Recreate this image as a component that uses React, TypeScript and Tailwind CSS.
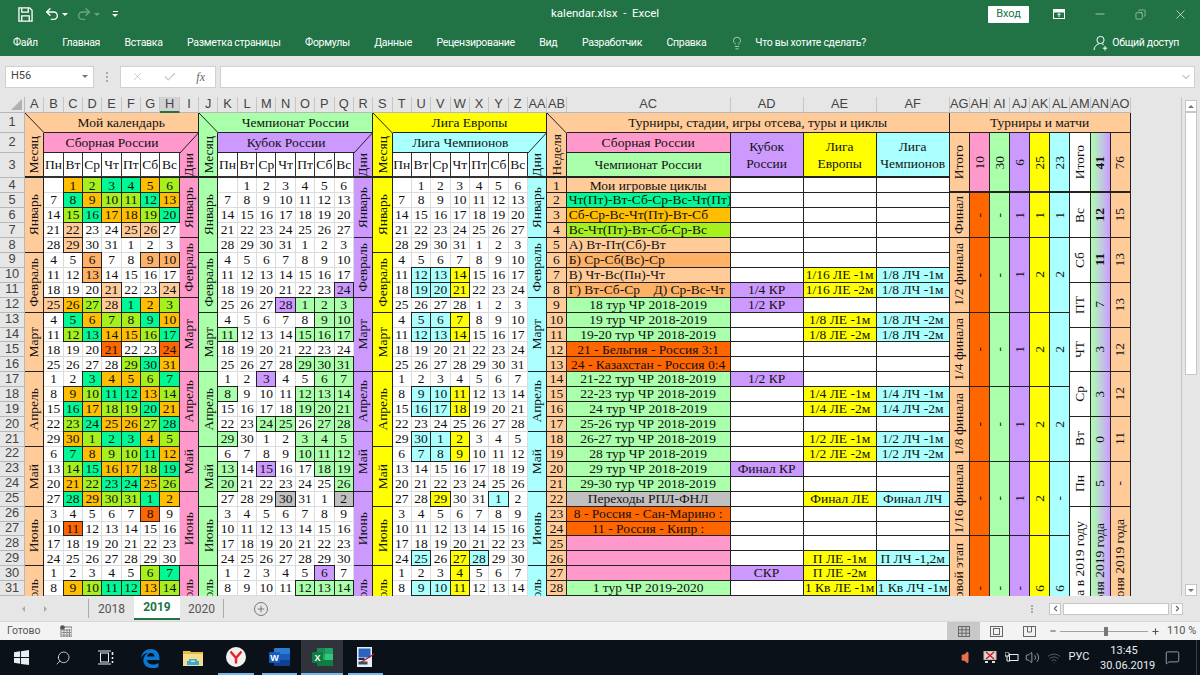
import React from "react";
import { Undo2, Redo2, X, Check, Lightbulb, ChevronDown, Minus, Copy, Search, MessageSquare, Volume2, Volume, Plus, Wifi, ChevronLeft, ChevronRight } from "lucide-react";

const LETTERS = ["A","B","C","D","E","F","G","H","I","J","K","L","M","N","O","P","Q","R","S","T","U","V","W","X","Y","Z","AA","AB","AC","AD","AE","AF","AG","AH","AI","AJ","AK","AL","AM","AN","AO"];

const RS: Record<number, string> = { 1: "", 2: "row-span-2", 3: "row-span-3", 4: "row-span-4", 5: "row-span-5", 7: "row-span-7", 9: "row-span-9" };

const PEACH = "bg-[#ffcc99]", PINK = "bg-[#ff99cc]", GREEN = "bg-[#aaffaa]", PURPLE = "bg-[#cc99ff]", YELLOW = "bg-[#ffff00]", CYAN = "bg-[#aaffff]", RED = "bg-[#ff6600]", GRAD = "bg-linear-to-r from-[#aaffaa] to-[#cc99ff]", WHITE = "bg-white";

const LINE = "border-r border-b border-[#222]";
const MARK = "relative z-10 -ml-px -mt-px border border-[#222] flex items-center justify-center";
const DAY: Record<string, string> = {
  ".": "bg-white border-r border-b border-[#dcdcdc] flex items-center justify-center",
  O: `bg-[#ffbf00] ${MARK}`,
  L: `bg-[#a6f01e] ${MARK}`,
  M: `bg-[#00f995] ${MARK}`,
  p: `bg-[#ffcc99] ${MARK}`,
  P: `bg-[#ffb266] ${MARK}`,
  R: `bg-[#ff6600] ${MARK}`,
  g: `bg-[#aaffaa] ${MARK}`,
  v: `bg-[#cc99ff] ${MARK}`,
  s: `bg-[#c0c0c0] ${MARK}`,
  c: `bg-[#aaffff] ${MARK}`,
  y: `bg-[#ffff00] ${MARK}`,
};

const B = ".......";
const CAL1 = [".OLMMOL",".MOLLMO",".LMOOLM",".p..pp.",".p.....","..P..PP","..P....","...p..p","pOLpMOL",".MOLLMO",".LMOOLM","...R..R","....LMO","..MOOLM",".OLMMOL",".MOLLMO",".LMOOLM",".OLMMOL",".MOLLMO",".LMOOLM",".OLMMOL",".MOLLMO",".....R.",".R.....",B,B,".....LM",".OLMMOL"];
const CAL2 = [B,B,B,B,B,B,B,"......v","...vggg",".....gg","g...ggg",B,"....ggg","..v..gg","g...ggg","....ggg","..gg.gg","g...ggg","....ggg","g.v..gg","g.....g","...s..s",B,B,B,B,".....v.","....ggg"];
const CAL3 = [B,B,B,B,B,B,".ccy...",".ccy...",B,".ccy...",".ccy...",B,B,B,".ccy...",".ccy...",B,".ccy...",".ccy...",B,B,"..y..c.",B,B,B,".c.yc..","...y...",".ccy..."];

const AC: [string, string, boolean?][] = [
  ["Мои игровые циклы", PEACH],
  ["Чт(Пт)-Вт-Сб-Ср-Вс-Чт(Пт)", "bg-[#00f995]", true],
  ["Сб-Ср-Вс-Чт(Пт)-Вт-Сб", "bg-[#ffbf00]", true],
  ["Вс-Чт(Пт)-Вт-Сб-Ср-Вс", "bg-[#a6f01e]", true],
  ["А) Вт-Пт(Сб)-Вт", PEACH, true],
  ["Б) Ср-Сб(Вс)-Ср", "bg-[#ffb266]", true],
  ["В) Чт-Вс(Пн)-Чт", PEACH, true],
  ["Г) Вт-Сб-Ср    Д) Ср-Вс-Чт", "bg-[#ffb266]", true],
  ["18 тур ЧР 2018-2019", GREEN],
  ["19 тур ЧР 2018-2019", GREEN],
  ["19-20 тур ЧР 2018-2019", GREEN],
  ["21 - Бельгия - Россия 3:1", RED],
  ["24 - Казахстан - Россия 0:4", RED],
  ["21-22 тур ЧР 2018-2019", GREEN],
  ["22-23 тур ЧР 2018-2019", GREEN],
  ["24 тур ЧР 2018-2019", GREEN],
  ["25-26 тур ЧР 2018-2019", GREEN],
  ["26-27 тур ЧР 2018-2019", GREEN],
  ["28 тур ЧР 2018-2019", GREEN],
  ["29 тур ЧР 2018-2019", GREEN],
  ["29-30 тур ЧР 2018-2019", GREEN],
  ["Переходы РПЛ-ФНЛ", "bg-[#c0c0c0]"],
  ["8 - Россия - Сан-Марино :", RED],
  ["11 - Россия - Кипр :", RED],
  ["", PINK],
  ["", PINK],
  ["", PINK],
  ["1 тур ЧР 2019-2020", GREEN],
];
const AD: Record<number, string> = { 11: "1/4 КР", 12: "1/2 КР", 17: "1/2 КР", 23: "Финал КР", 30: "СКР" };
const AE: Record<number, string> = { 10: "1/16 ЛЕ -1м", 11: "1/16 ЛЕ -2м", 13: "1/8 ЛЕ -1м", 14: "1/8 ЛЕ -2м", 18: "1/4 ЛЕ -1м", 19: "1/4 ЛЕ -2м", 21: "1/2 ЛЕ -1м", 22: "1/2 ЛЕ -2м", 25: "Финал ЛЕ", 29: "П ЛЕ -1м", 30: "П ЛЕ -2м", 31: "1 Кв ЛЕ -1м" };
const AF: Record<number, string> = { 10: "1/8 ЛЧ -1м", 11: "1/8 ЛЧ -1м", 13: "1/8 ЛЧ -2м", 14: "1/8 ЛЧ -2м", 18: "1/4 ЛЧ -1м", 19: "1/4 ЛЧ -2м", 21: "1/2 ЛЧ -1м", 22: "1/2 ЛЧ -2м", 25: "Финал ЛЧ", 29: "П ЛЧ -1,2м", 31: "1 Кв ЛЧ -1м" };

const LEFT_M: [number, number, string][] = [[4,5,"Январь"],[9,4,"Февраль"],[13,4,"Март"],[17,5,"Апрель"],[22,4,"Май"],[26,4,"Июнь"],[30,4,"Июль"]];
const RIGHT_M: [number, number, string][] = [[4,4,"Январь"],[8,4,"Февраль"],[12,5,"Март"],[17,4,"Апрель"],[21,4,"Май"],[25,5,"Июнь"],[30,4,"Июль"]];

const STAGES: [number, number, string, string[]][] = [
  [5,3,"Финал",["-","-","1","1","1"]],
  [8,5,"1/2 финала",["-","-","1","2","2"]],
  [13,5,"1/4 финала",["-","-","1","2","2"]],
  [18,5,"1/8 финала",["-","-","1","2","2"]],
  [23,5,"1/16 финала",["-","-","1","2","-"]],
  [28,7,"Групповой этап",["-","-","-","6","6"]],
];
const STAGE_BG = [RED, GREEN, PURPLE, YELLOW, CYAN];
const TOTALS: [number, number, string, string, string][] = [
  [5,3,"Вс","12","15"],
  [8,3,"Сб","11","13"],
  [11,3,"ПТ","7","13"],
  [14,3,"ЧТ","3","12"],
  [17,3,"Ср","3","12"],
  [20,3,"Вт","0","11"],
  [23,3,"Пн","5","-"],
  [26,9,"Матча в 2019 году","С июня 2019 года","До июня 2019 года"],
];

const Diag = ({ flip }: { flip?: boolean }) => (
  <svg className="absolute inset-0 w-full h-full" viewBox="0 0 100 100" preserveAspectRatio="none">
    <line x1={flip ? 100 : 0} y1="0" x2={flip ? 0 : 100} y2="100" stroke="#222" strokeWidth="1" vectorEffect="non-scaling-stroke" />
  </svg>
);
const Vert = ({ children, bold }: { children: React.ReactNode; bold?: boolean }) => (
  <span className={`[writing-mode:vertical-rl] rotate-180 whitespace-nowrap ${bold ? "font-bold" : ""}`}>{children}</span>
);
const CENTER = "flex items-center justify-center overflow-hidden";

function buildCells() {
  const c: React.ReactNode[] = [];
  let k = 0;
  const add = (cls: string, content?: React.ReactNode) => c.push(<div key={k++} className={cls}>{content}</div>);
  const rh = (n: number) => add("bg-[#e6e6e6] border-r border-b border-[#b8b8b8] font-['Liberation_Sans',sans-serif] text-[#444] text-[12.8px] flex items-center justify-center", n);

  // column letters
  add("bg-[#e6e6e6] border-r border-b border-[#b8b8b8] relative", <div className="absolute right-[2px] bottom-[2px] w-0 h-0 border-l-[11px] border-l-transparent border-b-[11px] border-b-[#b0b0b0]" />);
  LETTERS.forEach((l) =>
    add(`${l === "H" ? "bg-[#d2d2d2] border-b-2 border-b-[#217346]" : "bg-[#e6e6e6] border-b border-b-[#b8b8b8]"} border-r border-r-[#c6c6c6] font-['Liberation_Sans',sans-serif] text-[#444] text-[12.8px] flex items-center justify-center`, l)
  );

  // row 1
  rh(1);
  add(`${PEACH} relative`, <Diag />);
  add(`${PEACH} ${LINE} ${CENTER} col-span-8`, "Мой календарь");
  add(`${GREEN} relative`, <Diag />);
  add(`${GREEN} ${LINE} ${CENTER} col-span-8`, "Чемпионат России");
  add(`${YELLOW} relative`, <Diag />);
  add(`${YELLOW} ${LINE} ${CENTER} col-span-8`, "Лига Европы");
  add(`${PEACH} relative`, <Diag />);
  add(`${PEACH} ${LINE} ${CENTER} col-span-4`, "Турниры, стадии, игры отсева, туры и циклы");
  add(`${PEACH} ${LINE} ${CENTER} col-span-9`, "Турниры и матчи");

  // row 2
  rh(2);
  const labels: [string, string, string][] = [[PEACH, PINK, "Сборная России"], [GREEN, PURPLE, "Кубок России"], [YELLOW, CYAN, "Лига Чемпионов"]];
  labels.forEach(([a, b, t]) => {
    add(`${a} ${LINE} border-b-2 row-span-2 ${CENTER}`, <Vert>Месяц</Vert>);
    add(`${b} border-b border-[#222] ${CENTER} col-span-7`, t);
    add(`${b} border-r border-[#222] relative`, <Diag flip />);
  });
  add(`${PEACH} ${LINE} border-b-2 row-span-2 ${CENTER}`, <Vert>Неделя</Vert>);
  add(`${PINK} ${LINE} ${CENTER}`, "Сборная России");
  add(`${PURPLE} ${LINE} border-b-2 row-span-2 ${CENTER} text-center leading-[17px]`, <span>Кубок<br />России</span>);
  add(`${YELLOW} ${LINE} border-b-2 row-span-2 ${CENTER} text-center leading-[17px]`, <span>Лига<br />Европы</span>);
  add(`${CYAN} ${LINE} border-b-2 row-span-2 ${CENTER} text-center leading-[17px]`, <span>Лига<br />Чемпионов</span>);
  const heads: [string, string][] = [[PEACH, "Итого"], [PINK, "10"], [GREEN, "30"], [PURPLE, "6"], [YELLOW, "25"], [CYAN, "23"], [WHITE, "Итого"], [GRAD, "41"], [PEACH, "76"]];
  heads.forEach(([b, t]) => add(`${b} ${LINE} border-b-2 row-span-3 ${CENTER}`, <Vert bold={t === "41"}>{t}</Vert>));

  // row 3
  rh(3);
  const days = ["Пн", "Вт", "Ср", "Чт", "Пт", "Сб", "Вс"];
  [PINK, PURPLE, CYAN].forEach((b) => {
    days.forEach((d) => add(`bg-white border-r border-b-2 border-[#333] ${CENTER}`, d));
    add(`${b} ${LINE} border-b-2 ${CENTER}`, <Vert>Дни</Vert>);
  });
  add(`${GREEN} ${LINE} border-b-2 ${CENTER}`, "Чемпионат России");

  // data rows
  const monthAt = (list: [number, number, string][], r: number, bg: string) => {
    const m = list.find((x) => x[0] === r);
    if (m) add(`${bg} ${LINE} ${RS[m[1]]} ${CENTER}`, <Vert>{m[2]}</Vert>);
  };
  for (let r = 4; r <= 31; r++) {
    rh(r);
    const cal = (s: string) => {
      for (let d = 0; d < 7; d++) {
        const idx = (r - 4) * 7 + d - 1;
        const n = idx < 0 ? "" : new Date(2019, 0, 1 + idx).getDate();
        add(DAY[s[d]], n);
      }
    };
    monthAt(LEFT_M, r, PEACH);
    cal(CAL1[r - 4]);
    monthAt(RIGHT_M, r, PINK);
    monthAt(LEFT_M, r, GREEN);
    cal(CAL2[r - 4]);
    monthAt(RIGHT_M, r, PURPLE);
    monthAt(LEFT_M, r, YELLOW);
    cal(CAL3[r - 4]);
    monthAt(RIGHT_M, r, CYAN);
    add(`${PEACH} ${LINE} ${CENTER}`, r - 3);
    const [t, bg, left] = AC[r - 4];
    add(`${bg} border-r border-b border-[#222] flex items-center overflow-hidden whitespace-pre ${left ? "justify-start pl-[2px]" : "justify-center"}`, t);
    add(`${AD[r] ? PURPLE : WHITE} ${LINE} ${CENTER}`, AD[r]);
    add(`${AE[r] ? YELLOW : WHITE} ${LINE} ${CENTER} whitespace-nowrap`, AE[r]);
    add(`${AF[r] ? CYAN : WHITE} ${LINE} ${CENTER} whitespace-nowrap`, AF[r]);
    const st = STAGES.find((x) => x[0] === r);
    const to = TOTALS.find((x) => x[0] === r);
    if (st) {
      add(`${PEACH} ${LINE} ${RS[st[1]]} ${CENTER}`, <Vert>{st[2]}</Vert>);
      st[3].forEach((v, i) => add(`${STAGE_BG[i]} ${LINE} ${RS[st[1]]} ${CENTER}`, <Vert>{v}</Vert>));
    }
    if (to) {
      add(`${WHITE} ${LINE} ${RS[to[1]]} ${CENTER}`, <Vert>{to[2]}</Vert>);
      add(`${GRAD} ${LINE} ${RS[to[1]]} ${CENTER}`, <Vert bold={to[3] === "12" || to[3] === "11"}>{to[3]}</Vert>);
      add(`${PEACH} ${LINE} ${RS[to[1]]} ${CENTER}`, <Vert>{to[4]}</Vert>);
    }
  }
  return c;
}

const SaveIcon = () => (
  <svg width="15" height="15" viewBox="0 0 16 16" fill="none" stroke="white" strokeWidth="1.4">
    <path d="M1 1h11.5L15 3.5V15H1z" />
    <path d="M4 1v4.5h7V1" />
    <path d="M4 15v-5.5h8V15" />
  </svg>
);
const UserAdd = () => (
  <svg width="16" height="16" viewBox="0 0 16 16" fill="none" stroke="white" strokeWidth="1">
    <circle cx="7.5" cy="5" r="3.6" />
    <path d="M1 15c.3-3.5 2.5-5.6 5-6.2M8.8 8.8c.8.2 1.5.5 2 1" />
    <path d="M12 11v4.5M9.8 13.2h4.4" />
  </svg>
);
const Edge = () => (
  <svg width="20" height="20" viewBox="0 0 20 20">
    <path d="M1 10C2 4 6 1 11 1c5 0 8.500 3.500 8.500 9.500v1.500H7c.300 3 3 4.500 6 4.500 2 0 3.500-.5 5.500-1.500v4c-2 1-4 1.300-6 1.300C6 20 2.500 16 3.500 10.500 4.500 7.500 6 6 8 4.800 5 5 2.500 7 1 10zM7 8.500h7.500C14.300 6.300 13 5 11 5 9 5 7.500 6.300 7 8.500z" fill="#0a78d4" />
  </svg>
);
const Folder = () => (
  <svg width="20" height="18" viewBox="0 0 20 18">
    <path d="M0 2h7l2 2h-9z" fill="#e8c14a" />
    <rect x="0" y="3" width="20" height="14" fill="#f6dc8d" />
    <rect x="0" y="3" width="20" height="2" fill="#e8b93e" />
    <path d="M6 10h8v2h2v4H4v-4h2z" fill="#39a9dc" />
    <rect x="8" y="11.500" width="4" height="1.500" fill="#f6dc8d" />
  </svg>
);
const Yandex = () => (
  <svg width="20" height="20" viewBox="0 0 20 20">
    <circle cx="10" cy="10" r="10" fill="#f1f1f1" />
    <path d="M4.500 4.500L10 11v5.500M15.500 4.500L10 11" stroke="#e8212a" strokeWidth="2.400" fill="none" />
  </svg>
);
const Word = () => (
  <svg width="21" height="20" viewBox="0 0 21 20">
    <rect x="5" y="1" width="16" height="18" rx="1" fill="#2b7cd3" />
    <rect x="5" y="7" width="16" height="6" fill="#185abd" />
    <rect x="5" y="13" width="16" height="6" fill="#103f91" />
    <rect x="0" y="5" width="11" height="11" rx="1" fill="#185abd" />
    <text x="5.500" y="13.500" fontSize="9" fontWeight="700" fill="white" textAnchor="middle" fontFamily="'Liberation Sans',sans-serif">W</text>
  </svg>
);
const Excel = () => (
  <svg width="21" height="20" viewBox="0 0 21 20">
    <rect x="5" y="1" width="16" height="18" rx="1" fill="#21a366" />
    <rect x="5" y="1" width="8" height="6" fill="#1c8a58" />
    <rect x="13" y="7" width="8" height="6" fill="#33c481" />
    <rect x="5" y="13" width="16" height="6" fill="#107c41" />
    <rect x="0" y="5" width="11" height="11" rx="1" fill="#107c41" />
    <text x="5.500" y="13.500" fontSize="9" fontWeight="700" fill="white" textAnchor="middle" fontFamily="'Liberation Sans',sans-serif">X</text>
  </svg>
);
const OtherApp = () => (
  <svg width="20" height="20" viewBox="0 0 20 20">
    <rect x="1" y="0" width="15" height="20" fill="#e8eef8" />
    <rect x="2.500" y="1.500" width="12" height="9" fill="#2c62c0" />
    <rect x="2.500" y="11" width="6" height="2" fill="#1e2a44" />
    <path d="M4 16L18 7" stroke="#b01e2a" strokeWidth="1.400" />
    <rect x="2.500" y="14.500" width="9" height="3" fill="#444c5c" />
  </svg>
);
const Windows = () => (
  <svg width="15" height="15" viewBox="0 0 16 16" fill="#e9edf1">
    <path d="M0 2.300L6.500 1.400V7.500H0zM7.500 1.200L16 0V7.500H7.500zM0 8.500H6.500V14.600L0 13.700zM7.500 8.500H16V16L7.500 14.800z" />
  </svg>
);
const TaskView = () => (
  <svg width="16" height="15" viewBox="0 0 16 15" fill="none" stroke="#e9edf1" strokeWidth="1">
    <rect x="2.500" y="3" width="8" height="9" />
    <path d="M0 1h13M0 14h13" />
    <path d="M14.500 2v3M14.500 7v2M14.500 11v2" strokeWidth="1.600" />
  </svg>
);
const Net = () => (
  <svg width="14" height="13" viewBox="0 0 14 13">
    <rect x="1" y="0.500" width="12" height="8" fill="#d9d9d9" stroke="#bbb" />
    <path d="M3 1l8 7M11 1L3 8" stroke="#e0141c" strokeWidth="1.500" />
    <rect x="2" y="10" width="3" height="2" fill="#ddd" />
    <rect x="9" y="10" width="3" height="2" fill="#ddd" />
  </svg>
);
const Plug = () => (
  <svg width="14" height="11" viewBox="0 0 14 11" fill="none" stroke="#e9edf1" strokeWidth="1">
    <rect x="4.500" y="2.500" width="8.500" height="6" />
    <path d="M0 1v3h4V1M1 0v1M3 0v1M2 4v5h3" />
  </svg>
);
const ViewNormal = () => (
  <svg width="12" height="11" viewBox="0 0 12 11" fill="none" stroke="#666"><rect x="0.500" y="0.500" width="11" height="10" /><path d="M4 0v11M8 0v11M0 3.800h12M0 7.200h12" /></svg>
);
const ViewPage = () => (
  <svg width="13" height="11" viewBox="0 0 13 11" fill="none" stroke="#666"><rect x="0.500" y="0.500" width="12" height="10" /><rect x="3.500" y="2.500" width="6" height="6" /></svg>
);
const ViewBreak = () => (
  <svg width="13" height="11" viewBox="0 0 13 11" fill="none" stroke="#666"><rect x="0.500" y="0.500" width="12" height="10" /><path d="M4.500 0v6h4V0" /></svg>
);
const MacroIcon = () => (
  <svg width="12" height="12" viewBox="0 0 12 12"><rect x="1" y="2" width="11" height="10" fill="none" stroke="#777" /><path d="M2 5h9M2 7.500h9M2 10h9M4 4v8M7 4v8M9.500 4v8" stroke="#888" /><circle cx="2.500" cy="2.500" r="2.300" fill="#555" /></svg>
);

const TABS = ["Файл", "Главная", "Вставка", "Разметка страницы", "Формулы", "Данные", "Рецензирование", "Вид", "Разработчик", "Справка"];

export default function App() {
  return (
    <div className="w-[1200px] h-[675px] overflow-hidden flex flex-col font-['Roboto',sans-serif] bg-[#e6e6e6]">
      {/* title bar */}
      <div className="h-[28px] shrink-0 bg-[#217346] flex items-center text-white">
        <div className="w-[551px] shrink-0 flex items-center pl-[18px] gap-[8px]">
          <SaveIcon />
          <div className="flex items-center ml-[3px]">
            <Undo2 size={16} strokeWidth={2} />
            <div className="ml-[2px] w-0 h-0 border-x-[3px] border-x-transparent border-t-[3px] border-t-white" />
          </div>
          <div className="flex items-center text-[#6fa287]">
            <Redo2 size={16} strokeWidth={2} />
            <div className="ml-[2px] w-0 h-0 border-x-[3px] border-x-transparent border-t-[3px] border-t-[#6fa287]" />
          </div>
          <div className="ml-[4px] flex flex-col items-center gap-[2px]">
            <div className="w-[5px] h-px bg-white" />
            <div className="w-0 h-0 border-x-[3px] border-x-transparent border-t-[3px] border-t-white" />
          </div>
        </div>
        <div className="text-[11.5px] whitespace-pre">kalendar.xlsx  -  Excel</div>
        <div className="flex-1 flex items-center justify-end">
          <div className="w-[41px] h-[17px] bg-white rounded-[1px] text-[#217346] text-[11px] flex items-center justify-center mr-[9px]">Вход</div>
          <div className="w-[41px] flex justify-center">
            <svg width="12" height="10" viewBox="0 0 12 10" fill="none" stroke="white"><rect x="0.500" y="0.500" width="11" height="9" /><rect x="0.500" y="0.500" width="11" height="2.500" fill="white" /><path d="M6 8V4.500M4.500 6L6 4.500 7.500 6" /></svg>
          </div>
          <div className="w-[41px] flex justify-center"><Minus size={14} strokeWidth={1} /></div>
          <div className="w-[40px] flex justify-center"><Copy size={11} strokeWidth={1} className="-scale-x-100" /></div>
          <div className="w-[40px] flex justify-center"><X size={15} strokeWidth={1} /></div>
        </div>
      </div>
      {/* ribbon tabs */}
      <div className="h-[28px] shrink-0 bg-[#217346] flex items-center text-white text-[10.5px] tracking-[-0.3px] pl-[13px] pt-[2px]">
        <div className="flex items-center gap-[24.5px]">
          {TABS.map((t) => <span key={t} className="whitespace-nowrap">{t}</span>)}
        </div>
        <Lightbulb size={14} strokeWidth={1} className="ml-[24px]" />
        <span className="ml-[11px] whitespace-nowrap">Что вы хотите сделать?</span>
        <div className="ml-auto flex items-center mr-[21px]">
          <UserAdd />
          <span className="ml-[3px] whitespace-nowrap">Общий доступ</span>
        </div>
      </div>
      {/* formula bar */}
      <div className="h-[41px] shrink-0 bg-[#e6e6e6] flex items-center pl-[5px] pr-[5px]">
        <div className="w-[89px] h-[22px] bg-white border border-[#d0d0d0] flex items-center justify-between px-[5px] text-[11px] text-[#444]">
          <span>H56</span>
          <div className="w-0 h-0 border-x-[3.500px] border-x-transparent border-t-[3.500px] border-t-[#777]" />
        </div>
        <div className="w-[26px] flex flex-col items-center gap-[2px]">
          <div className="w-[2px] h-[2px] bg-[#aaa]" />
          <div className="w-[2px] h-[2px] bg-[#aaa]" />
          <div className="w-[2px] h-[2px] bg-[#aaa]" />
        </div>
        <div className="w-[96px] h-[22px] bg-white border border-[#d0d0d0] flex items-center justify-between px-[10px] text-[#c4c4c4]">
          <X size={13} strokeWidth={1.500} />
          <Check size={14} strokeWidth={2} />
          <span className="font-['Liberation_Serif',serif] italic text-[#666] text-[12px]">fx</span>
        </div>
        <div className="ml-[4px] flex-1 h-[22px] bg-white border border-[#d0d0d0] flex items-center justify-end pr-[2px]">
          <ChevronDown size={12} className="text-[#777]" strokeWidth={1.500} />
        </div>
      </div>
      {/* sheet */}
      <div className="h-[499px] shrink-0 flex overflow-hidden">
        <div className="w-[1131px] h-[499px] overflow-hidden shrink-0">
          <div className="grid grid-cols-[25px_repeat(28,19.35px)_164px_repeat(3,73px)_repeat(9,20.14px)] grid-rows-[16.3px_20px_20px_25px_repeat(31,14.926px)] font-['Liberation_Serif',serif] text-[13.5px] leading-none text-[#111]">
            {buildCells()}
          </div>
        </div>
        <div className="flex-1 border-r border-[#c4c4c4]" />
        <div className="w-[18px] flex flex-col items-center pr-[3px] pl-[3px] bg-[#e6e6e6]">
          <div className="w-[12px] h-[12px] mt-[3px] bg-white border border-[#c6c6c6] flex items-center justify-center">
            <div className="w-0 h-0 border-x-[3px] border-x-transparent border-b-[3px] border-b-[#777]" />
          </div>
          <div className="w-[12px] h-[263px] bg-white border border-[#c6c6c6]" />
          <div className="mt-auto w-[12px] h-[12px] bg-white border border-[#c6c6c6] flex items-center justify-center">
            <div className="w-0 h-0 border-x-[3px] border-x-transparent border-t-[3px] border-t-[#777]" />
          </div>
        </div>
      </div>
      {/* sheet tabs */}
      <div className="h-[25px] shrink-0 bg-[#e6e6e6] flex items-stretch text-[12px] text-[#555]">
        <div className="w-[88px] flex items-center text-[#aaa] pl-[22px] gap-[19px]">
          <div className="w-0 h-0 border-y-[3.500px] border-y-transparent border-r-[3.500px] border-r-[#aaa]" />
          <div className="w-0 h-0 border-y-[3.500px] border-y-transparent border-l-[3.500px] border-l-[#aaa]" />
        </div>
        <div className="w-[46px] flex items-center justify-center border-l border-[#aaa] my-[3px]">2018</div>
        <div className="w-[46px] flex items-center justify-center bg-white text-[#217346] font-bold border-b-2 border-[#217346] mb-[1px]">2019</div>
        <div className="w-[44px] flex items-center justify-center border-r border-[#aaa] my-[3px]">2020</div>
        <div className="ml-[30px] flex items-center">
          <div className="w-[14px] h-[14px] rounded-full border border-[#777] flex items-center justify-center"><Plus size={10} className="text-[#666]" /></div>
        </div>
        <div className="ml-auto flex items-center gap-[2px] pr-[17px]">
          <div className="w-[2px] h-[8px] mr-[14px] border-l-2 border-dotted border-[#aaa]" />
          <div className="w-[12px] h-[12px] bg-white border border-[#c6c6c6] flex items-center justify-center"><ChevronLeft size={9} className="text-[#666]" strokeWidth={3} /></div>
          <div className="w-[106px] h-[12px] bg-white border border-[#c6c6c6]" />
          <div className="w-[12px] h-[12px] bg-white border border-[#c6c6c6] flex items-center justify-center"><ChevronRight size={9} className="text-[#666]" strokeWidth={3} /></div>
        </div>
      </div>
      {/* status bar */}
      <div className="h-[19px] shrink-0 bg-[#f3f3f3] border-t border-[#d8d8d8] flex items-center text-[10.5px] text-[#555] pl-[7px]">
        <span>Готово</span>
        <span className="ml-[19px]"><MacroIcon /></span>
        <div className="ml-auto flex items-center h-full">
          <div className="w-[33px] h-full bg-[#c8c8c8] flex items-center justify-center"><ViewNormal /></div>
          <div className="w-[33px] flex items-center justify-center"><ViewPage /></div>
          <div className="w-[33px] flex items-center justify-center"><ViewBreak /></div>
          <Minus size={8} strokeWidth={3} className="ml-[3px] text-[#555]" />
          <div className="relative w-[88px] h-px bg-[#a0a0a0] mx-[3px]">
            <div className="absolute left-[44px] -top-[4px] w-[4px] h-[9px] bg-[#777]" />
          </div>
          <Plus size={9} strokeWidth={3} className="text-[#555]" />
          <span className="ml-[7px] w-[33px] text-[11px] whitespace-nowrap">110 %</span>
        </div>
      </div>
      {/* taskbar */}
      <div className="h-[35px] shrink-0 bg-[#0b1118] flex items-stretch text-[#e9edf1]">
        <div className="w-[42px] flex items-center justify-center"><Windows /></div>
        <div className="w-[42px] flex items-center justify-center"><Search size={16} strokeWidth={1.200} className="-scale-x-100" /></div>
        <div className="w-[44px] flex items-center justify-center"><TaskView /></div>
        <div className="w-[43px] flex items-center justify-center"><Edge /></div>
        <div className="w-[43px] flex items-center justify-center"><Folder /></div>
        <div className="w-[36px] ml-[4px] flex items-center justify-center border-b-2 border-[#76b9ed]"><Yandex /></div>
        <div className="w-[35px] ml-[8px] flex items-center justify-center border-b-2 border-[#76b9ed]"><Word /></div>
        <div className="w-[42px] ml-[4px] flex items-center justify-center bg-[#30343a] border-b-2 border-[#76b9ed]"><Excel /></div>
        <div className="w-[35px] ml-[5px] flex items-center justify-center border-b-2 border-[#76b9ed]"><OtherApp /></div>
        <div className="ml-auto flex items-center">
          <div className="w-[22px] flex justify-center"><Volume size={15} fill="#e8734a" className="text-[#e8734a]" /></div>
          <div className="w-[22px] flex justify-center"><Net /></div>
          <div className="w-[21px] flex justify-center"><Plug /></div>
          <div className="w-[21px] flex justify-center"><Volume2 size={15} strokeWidth={1} /></div>
          <div className="w-[22px] flex justify-center"><Wifi size={14} strokeWidth={1} className="text-[#8a8f94]" /></div>
          <div className="w-[28px] text-center text-[11px]">РУС</div>
          <div className="w-[48px] ml-[7px] text-center text-[11px] leading-[15px]">
            <div>13:45</div>
            <div className="whitespace-nowrap">30.06.2019</div>
          </div>
          <div className="w-[48px] flex justify-center"><MessageSquare size={15} strokeWidth={1} /></div>
          <div className="w-[4px] h-full border-l border-[#3a3f45]" />
        </div>
      </div>
    </div>
  );
}
